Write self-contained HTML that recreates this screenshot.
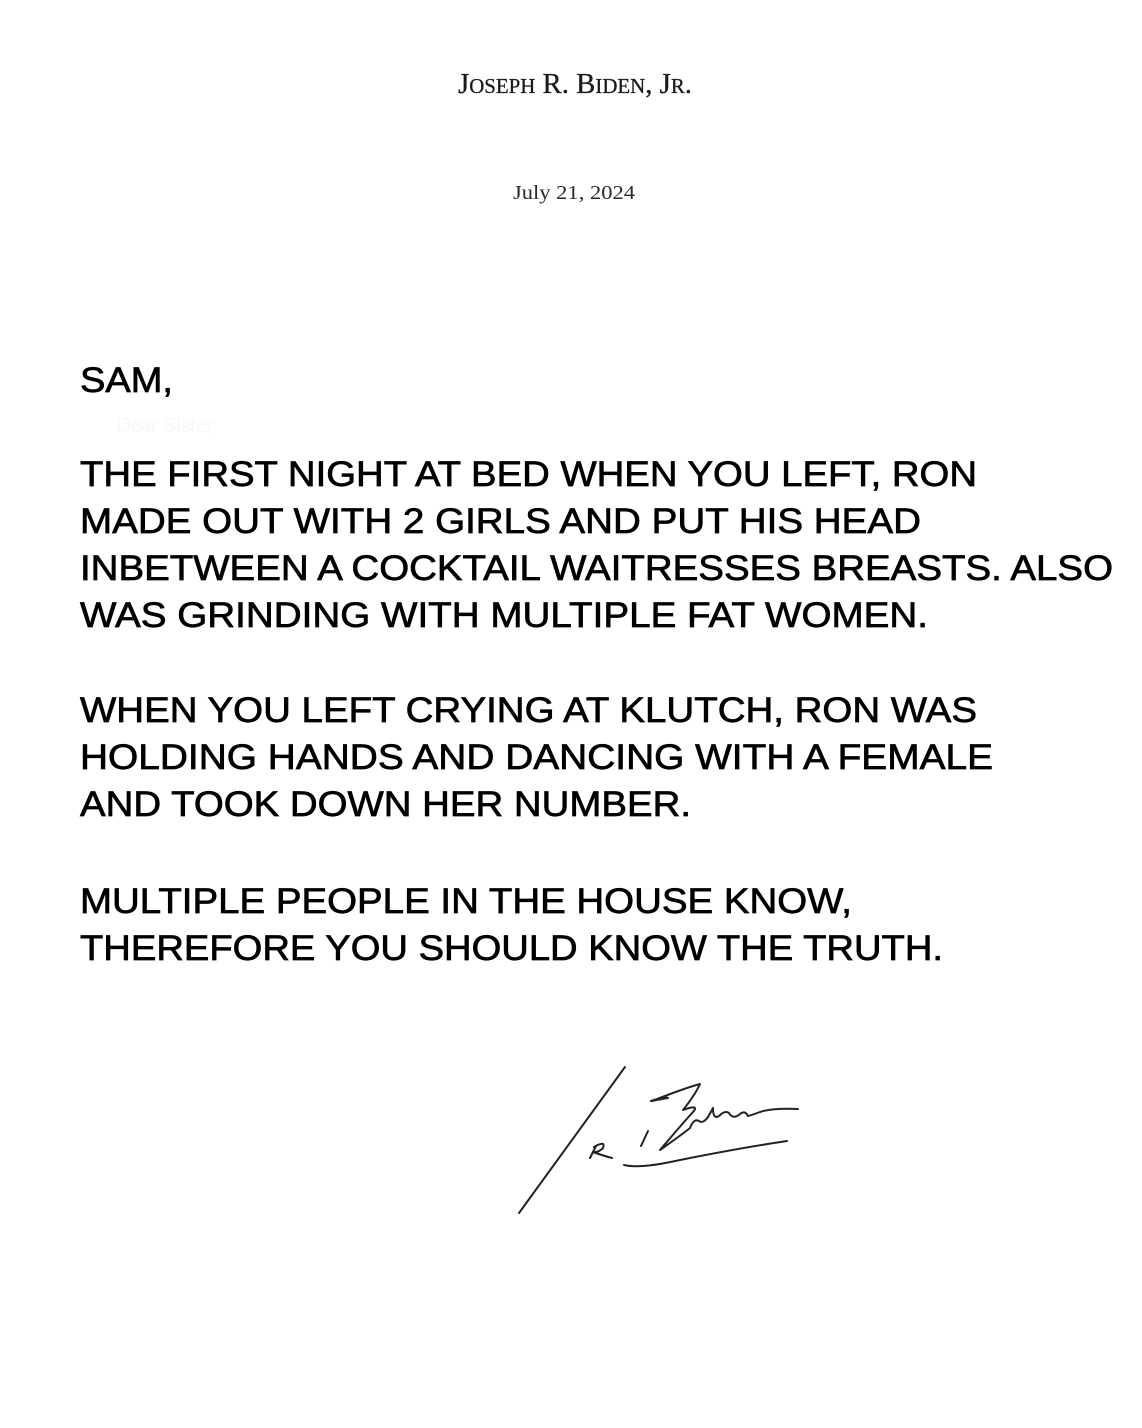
<!DOCTYPE html>
<html><head><meta charset="utf-8"><style>
html,body{margin:0;padding:0;background:#fff;}
svg{display:block;}
</style></head><body>
<svg width="1142" height="1428" viewBox="0 0 1142 1428" xmlns="http://www.w3.org/2000/svg">
<rect width="1142" height="1428" fill="#fff"/>
<text x="458" y="93" font-family="Liberation Serif, serif" font-size="29" fill="#1a1a1a" stroke="#1a1a1a" stroke-width="0.3" textLength="234" lengthAdjust="spacingAndGlyphs">J<tspan font-size="21">OSEPH</tspan> R. B<tspan font-size="21">IDEN</tspan>, J<tspan font-size="21">R</tspan>.</text>
<text x="513" y="199" font-family="Liberation Serif, serif" font-size="20" fill="#2a2a2a" textLength="122" lengthAdjust="spacingAndGlyphs">July 21, 2024</text>
<g font-family="Liberation Sans, Arial, sans-serif" font-size="35" fill="#000" stroke="#000" stroke-width="0.7">
<text x="80" y="392" textLength="93" lengthAdjust="spacingAndGlyphs">SAM,</text>
<text x="80" y="486" textLength="897" lengthAdjust="spacingAndGlyphs">THE FIRST NIGHT AT BED WHEN YOU LEFT, RON</text>
<text x="80" y="533" textLength="841" lengthAdjust="spacingAndGlyphs">MADE OUT WITH 2 GIRLS AND PUT HIS HEAD</text>
<text x="80" y="580" textLength="1033" lengthAdjust="spacingAndGlyphs">INBETWEEN A COCKTAIL WAITRESSES BREASTS. ALSO</text>
<text x="80" y="627" textLength="848" lengthAdjust="spacingAndGlyphs">WAS GRINDING WITH MULTIPLE FAT WOMEN.</text>
<text x="80" y="722" textLength="897" lengthAdjust="spacingAndGlyphs">WHEN YOU LEFT CRYING AT KLUTCH, RON WAS</text>
<text x="80" y="769" textLength="913" lengthAdjust="spacingAndGlyphs">HOLDING HANDS AND DANCING WITH A FEMALE</text>
<text x="80" y="816" textLength="611" lengthAdjust="spacingAndGlyphs">AND TOOK DOWN HER NUMBER.</text>
<text x="80" y="913" textLength="772" lengthAdjust="spacingAndGlyphs">MULTIPLE PEOPLE IN THE HOUSE KNOW,</text>
<text x="80" y="960" textLength="863" lengthAdjust="spacingAndGlyphs">THEREFORE YOU SHOULD KNOW THE TRUTH.</text>
</g>
<text x="115" y="432" font-family="Liberation Serif, serif" font-size="22" fill="#f7f7f7">Dear Sister,</text>
<g fill="none" stroke="#222" stroke-width="2" stroke-linecap="round" stroke-linejoin="round">
<path d="M625 1067 L519 1213"/>
<path d="M596 1146 L590 1158 M594 1147 Q606 1140 603 1148 Q598 1153 593 1152 Q604 1156 612 1158"/>
<path d="M648 1131 L641 1146"/>
<path d="M651 1101 Q665 1096 668 1098 Q662 1099 652 1101 Q685 1088 700 1084 Q695 1095 683 1110 Q700 1104 693 1112 Q682 1124 660 1150 Q680 1136 690 1128 Q694 1118 699 1121 Q703 1124 708 1117 Q712 1110 713 1108 Q713 1120 719 1116 Q725 1110 729 1113 Q733 1120 740 1114 Q745 1110 748 1116 Q752 1115 760 1112 Q772 1108 798 1109"/>
<path d="M624 1165 Q640 1169 680 1160 Q740 1148 787 1141"/>
</g>
</svg>
</body></html>
